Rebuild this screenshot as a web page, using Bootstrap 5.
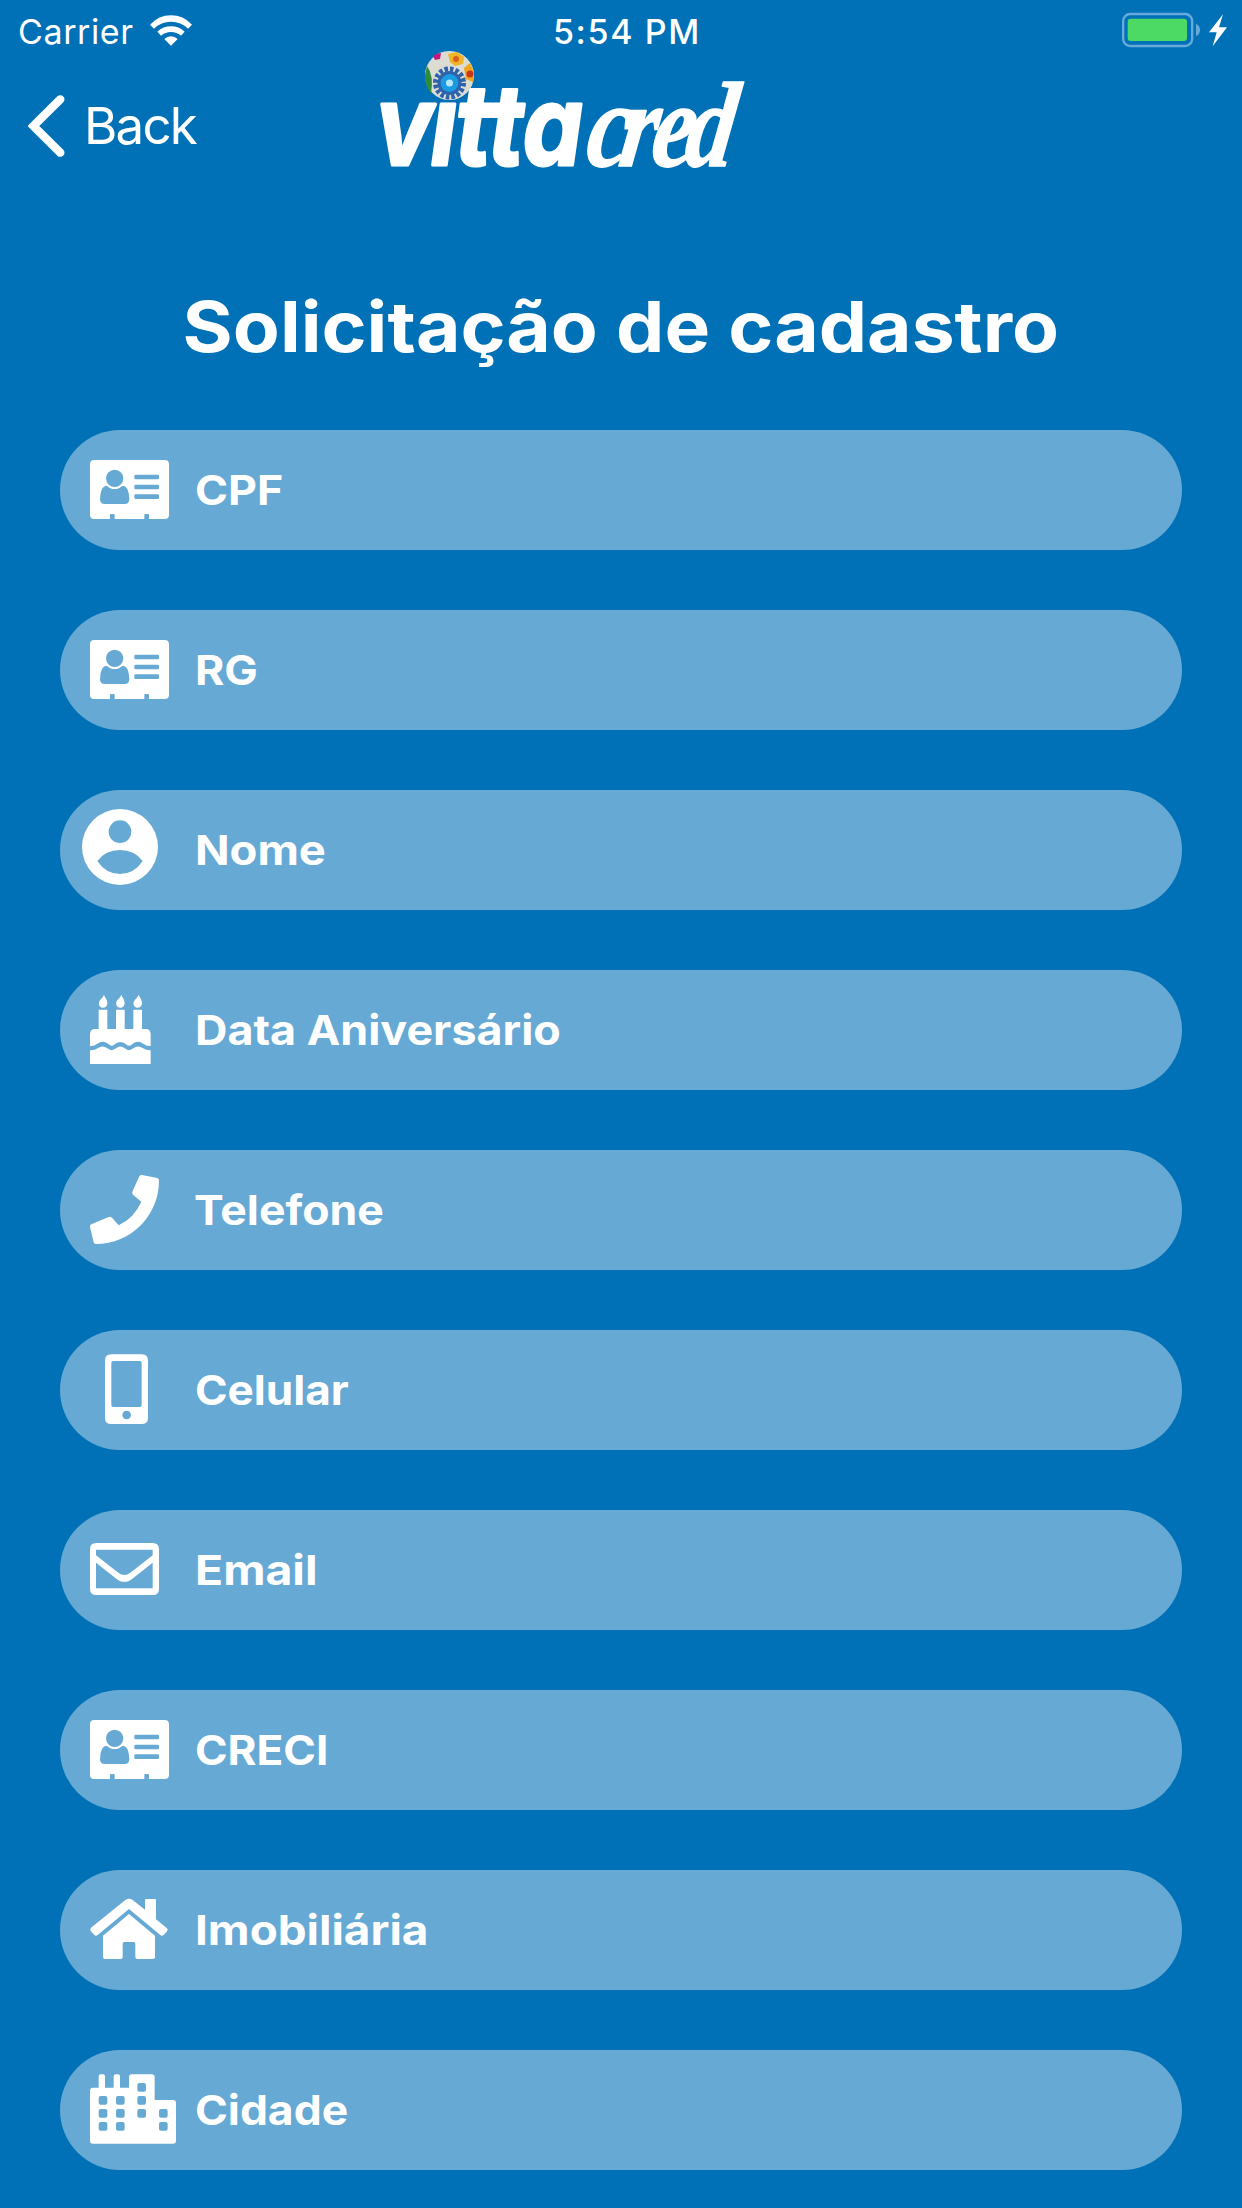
<!DOCTYPE html>
<html lang="pt-BR">
<head>
<meta charset="utf-8">
<title>Vittacred</title>
<link rel="stylesheet" href="https://cdn.jsdelivr.net/npm/bootstrap@5.3.0/dist/css/bootstrap.min.css">
<script src="https://cdn.jsdelivr.net/npm/bootstrap@5.3.0/dist/js/bootstrap.bundle.min.js"></script>
<style>
  body { background: #0071b7; color: #fff; font-family: Inter, "Liberation Sans", sans-serif; }
  .screen { width: 1242px; height: 2208px; overflow: hidden; }
  .status-bar { height: 60px; }
  .status-left { width: 553px; padding-left: 18px; font-size: 34px; letter-spacing: .6px; line-height: 63px; }
  .status-time { font-size: 34px; font-weight: 500; letter-spacing: 1.6px; line-height: 63px; }
  .wifi { margin-top: 15px; }
  .nav-top { height: 180px; margin-top: -12px; }
  .back-link { width: 361px; height: 156px; padding-left: 28px; font-size: 51px; letter-spacing: -1.8px; }
  .back-link span { line-height: 60px; margin-left: 19px; }
  .page-title { height: 202px; margin: 0; font-size: 70px; font-weight: 700; line-height: 198px; }
  .page-title span, .field-label { display: inline-block; transform: scaleX(var(--sx, 1.096)); transform-origin: 0 50%; white-space: nowrap; }
  .page-title span { transform-origin: 50% 50%; }
  .field-list { gap: 60px; padding: 0 60px; }
  .field-row { height: 120px; background: rgba(255,255,255,.4); }
  .field-row svg { width: 134px; height: 120px; fill: #fff; }
  .field-label { font-size: 41px; font-weight: 700; line-height: 120px; margin-left: 1px; }
  .f-cpf { --sx: 1.09; }
  .f-rg { --sx: 1.09; }
  .f-nome { --sx: 1.107; }
  .f-data { --sx: 1.094; }
  .f-tel { --sx: 1.087; margin-left: 0; }
  .f-cel { --sx: 1.075; }
  .f-email { --sx: 1.13; }
  .f-creci { --sx: 1.075; }
  .f-imob { --sx: 1.117; }
  .f-cidade { --sx: 1.083; }
</style>
</head>
<body>
<svg width="0" height="0" class="position-absolute">
  <symbol id="idcard" viewBox="30 30 402 360">
    <path fill-rule="evenodd" d="M133 120H344Q357 120 357 133V284Q357 297 344 297H297V285Q297 282 294 282H286Q283 282 283 285V297H194V285Q194 282 191 282H183Q180 282 180 285V297H133Q120 297 120 284V133Q120 120 133 120Z
    M194 149A26 26 0 1 0 194 201A26 26 0 1 0 194 149Z
    M172 197Q194 216 216 197Q228 197 233 209Q238 222 238 237Q238 252 224 252H164Q150 252 150 237Q150 222 155 209Q160 197 172 197Z
    M257 164H323Q327 164 327 168V174Q327 178 323 178H257Q253 178 253 174V168Q253 164 257 164Z
    M257 194H323Q327 194 327 198V204Q327 208 323 208H257Q253 208 253 204V198Q253 194 257 194Z
    M257 223H323Q327 223 327 227V233Q327 237 323 237H257Q253 237 253 233V227Q253 223 257 223Z"/>
    <path d="M170 194Q194 216 218 194" fill="none" stroke="#fff" stroke-width="4"/>
  </symbol>
</svg>

<div class="screen d-flex flex-column">
  <header class="status-bar d-flex flex-shrink-0">
    <div class="status-left d-flex gap-3">
      <span>Carrier</span>
      <svg class="wifi" width="42" height="31" viewBox="450 44 126 91" fill="#fff">
        <path d="M450 72Q476 44 513 44Q550 44 576 72L564 84Q543 63 513 63Q483 63 462 84Z"/>
        <path d="M472 93Q489 77 513 77Q537 77 554 93L543 105Q530 94 513 94Q496 94 483 105Z"/>
        <path d="M493 115Q502 107 513 107Q524 107 533 115L513 135Z"/>
      </svg>
    </div>
    <div class="status-time">5:54 PM</div>
    <svg class="ms-auto" width="142" height="60" viewBox="0 0 426 180">
      <rect x="69.500" y="42" width="207" height="96" rx="21" fill="none" stroke="#66aadb" stroke-width="7"/>
      <rect x="83" y="56" width="178" height="67" rx="9" fill="#4cd964"/>
      <path d="M288 71Q300 77 300 90Q300 103 288 109Z" fill="#66aadb"/>
      <path d="M369 43L327 97H350L338 139L381 82H357Z" fill="#fff"/>
    </svg>
  </header>

  <nav class="nav-top d-flex flex-shrink-0">
    <a href="#" class="back-link d-flex align-items-center text-white text-decoration-none">
      <svg width="37" height="62" viewBox="83 284 111 186"><path d="M180 297L99 377L180 457" fill="none" stroke="#fff" stroke-width="25" stroke-linecap="round" stroke-linejoin="miter"/></svg>
      <span>Back</span>
    </a>
    <svg width="410" height="160" viewBox="361 48 410 160" overflow="visible">
      <g fill="#fff" stroke="#fff" stroke-linejoin="round">
        <text transform="translate(0 165) scale(.86 1)" x="437 501 530 568 608" y="0" font-family="Inter" font-style="italic" font-weight="700" font-size="111" stroke-width="3">vitta</text>
        <text transform="translate(584 166) skewX(-8) scale(.8 1)" x="0 41 81 123" y="0" font-family="Liberation Serif" font-style="italic" font-weight="700" font-size="121" stroke-width="1.500">cred</text>
      </g>
      <circle cx="449.500" cy="75.500" r="24.500" fill="#dcdcd2"/>
      <path d="M427 66Q434 75 431 94Q424 83 425 75Z" fill="#2f8a3c"/>
      <path d="M433 56Q437 53 441 53L440 59L435 60Z" fill="#c2187f"/>
      <path d="M448 54L457 52L464 57L463 64L455 66L450 62Z" fill="#f0b429"/>
      <circle cx="456" cy="59" r="3" fill="#d9601c"/>
      <path d="M464 68L470 63Q475 72 473 82L466 79Z" fill="#f2a517"/>
      <circle cx="470" cy="74" r="3.500" fill="#c8351d"/>
      <circle cx="449.500" cy="83" r="12" fill="#2e62ab"/>
      <circle cx="449.500" cy="83" r="14" fill="none" stroke="#2e62ab" stroke-width="5" stroke-dasharray="3.500 2"/>
      <circle cx="449.500" cy="83" r="9" fill="#1b9ce2"/>
      <circle cx="449.500" cy="83" r="3.500" fill="#b5e8fb"/>
    </svg>
  </nav>

  <h1 class="page-title text-center flex-shrink-0"><span>Solicitação de cadastro</span></h1>

  <main class="field-list d-flex flex-column">
    <div class="field-row rounded-pill d-flex flex-shrink-0"><svg><use href="#idcard"/></svg><span class="field-label f-cpf">CPF</span></div>
    <div class="field-row rounded-pill d-flex flex-shrink-0"><svg><use href="#idcard"/></svg><span class="field-label f-rg">RG</span></div>
    <div class="field-row rounded-pill d-flex flex-shrink-0">
      <svg viewBox="30 30 402 360"><path fill-rule="evenodd" d="M210 87A114 114 0 1 0 210 315A114 114 0 1 0 210 87ZM210 121A34 34 0 1 1 210 189A34 34 0 1 1 210 121ZM142 243Q165 211 210 210Q255 211 278 243Q252 282 210 282Q168 282 142 243Z"/></svg>
      <span class="field-label f-nome">Nome</span></div>
    <div class="field-row rounded-pill d-flex flex-shrink-0">
      <svg viewBox="30 570 402 360">
        <path d="M162 644Q165 652 169 658Q175 671 169 679Q159 688 149 679Q143 668 151 659Q160 652 162 644ZM214 644Q217 652 221 658Q227 671 221 679Q211 688 201 679Q195 668 203 659Q212 652 214 644ZM266 644Q269 652 273 658Q279 671 273 679Q263 688 253 679Q247 668 255 659Q264 652 266 644Z"/>
        <path d="M146 689H172V747H198V689H224V747H250V689H276V747H286Q302 747 302 763V798Q289 799 280 791Q264 780 248 791Q237 803 226 791Q211 781 196 791Q185 803 174 791Q158 780 142 791Q132 799 120 798V763Q120 747 136 747H146Z"/>
        <path d="M120 811Q134 812 144 804Q158 795 171 804Q185 817 199 804Q211 795 223 804Q237 817 251 804Q264 795 278 804Q290 812 302 811V852H120Z"/>
      </svg>
      <span class="field-label f-data">Data Aniversário</span></div>
    <div class="field-row rounded-pill d-flex flex-shrink-0">
      <svg viewBox="30 30 402 360"><path d="M276 105L322 114Q327 116 327 122C327 226 243 312 137 312Q132 312 131 307L120 261Q119 255 124 253L176 231Q182 229 186 233L206 256Q253 233 274 185L249 164Q245 160 247 155L268 109Q271 104 276 105Z"/></svg>
      <span class="field-label f-tel">Telefone</span></div>
    <div class="field-row rounded-pill d-flex flex-shrink-0">
      <svg viewBox="30 570 402 360"><path fill-rule="evenodd" d="M184 643H275Q294 643 294 662V833Q294 852 275 852H184Q165 852 165 833V662Q165 643 184 643ZM189 663Q184 663 184 668V796Q184 801 189 801H270Q275 801 275 796V668Q275 663 270 663ZM230 812A13 13 0 1 0 230 838A13 13 0 1 0 230 812Z"/></svg>
      <span class="field-label f-cel">Celular</span></div>
    <div class="field-row rounded-pill d-flex flex-shrink-0">
      <svg viewBox="30 30 402 360"><path fill-rule="evenodd" d="M139 129H308Q327 129 327 148V266Q327 285 308 285H139Q120 285 120 266V148Q120 129 139 129ZM138 149V166L205 218Q223 232 241 218L308 166V149ZM138 188V265H308V188L251 233Q223 258 195 233Z"/></svg>
      <span class="field-label f-email">Email</span></div>
    <div class="field-row rounded-pill d-flex flex-shrink-0"><svg><use href="#idcard"/></svg><span class="field-label f-creci">CRECI</span></div>
    <div class="field-row rounded-pill d-flex flex-shrink-0">
      <svg viewBox="30 30 402 360">
        <path d="M226 120Q237 113 248 120L285 149V121Q285 117 289 117H314Q318 117 318 121V178L350 204Q356 209 351 214L341 225Q336 229 331 225L237 147L143 225Q138 229 133 225L123 214Q118 208 123 203Z"/>
        <path d="M237 162L315 227V291Q315 297 309 297H262Q256 297 256 291V251Q256 246 251 246H223Q218 246 218 251V291Q218 297 212 297H165Q159 297 159 291V227Z"/>
      </svg>
      <span class="field-label f-imob">Imobiliária</span></div>
    <div class="field-row rounded-pill d-flex flex-shrink-0">
      <svg viewBox="30 570 402 360">
        <path d="M120 692Q120 683 129 683H146V649Q146 643 152 643H159Q165 643 165 649V683H191V649Q191 643 197 643H204Q210 643 210 649V683H237V652Q237 643 246 643H305Q314 643 314 652V720H369Q378 720 378 729V842Q378 851 369 851H129Q120 851 120 842Z"/>
        <g fill="#66aad4">
          <rect x="146" y="708" width="26" height="26" rx="6"/><rect x="198" y="708" width="26" height="26" rx="6"/>
          <rect x="146" y="747" width="26" height="26" rx="6"/><rect x="198" y="747" width="26" height="26" rx="6"/>
          <rect x="146" y="786" width="26" height="26" rx="6"/><rect x="198" y="786" width="26" height="26" rx="6"/>
          <rect x="262" y="669" width="26" height="26" rx="6"/><rect x="262" y="708" width="26" height="26" rx="6"/><rect x="262" y="747" width="26" height="26" rx="6"/>
          <rect x="327" y="747" width="26" height="26" rx="6"/><rect x="327" y="786" width="26" height="26" rx="6"/>
        </g>
      </svg>
      <span class="field-label f-cidade">Cidade</span></div>
  </main>
</div>
</body>
</html>
